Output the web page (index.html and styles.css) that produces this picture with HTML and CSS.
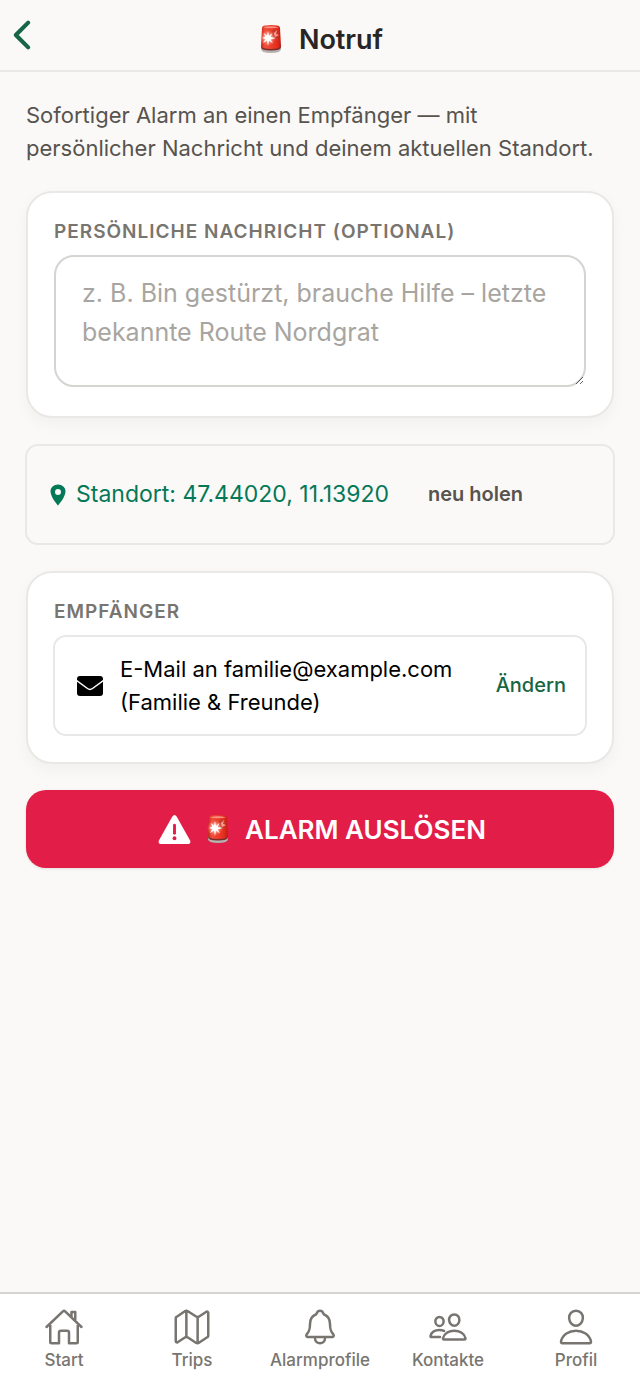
FILE: index.html
```
<!DOCTYPE html>
<html lang="de">
<head>
  <meta charset="UTF-8">
  <meta name="viewport" content="width=device-width, initial-scale=1">
  <title>Notruf</title>
  <link rel="stylesheet" href="styles.css">
</head>
<body>

  <!-- Siren, used in the title and on the alarm button -->
  <svg class="sprite" aria-hidden="true">
    <defs>
      <linearGradient id="glass" x1="0" x2="1" y1="0" y2="0">
        <stop offset="0" stop-color="#c9281c"/>
        <stop offset="0.2" stop-color="#f0513c"/>
        <stop offset="0.8" stop-color="#e52d1c"/>
        <stop offset="1" stop-color="#b81d14"/>
      </linearGradient>
      <radialGradient id="glow">
        <stop offset="0" stop-color="#fff"/>
        <stop offset="0.4" stop-color="#ffc4b8" stop-opacity="0.8"/>
        <stop offset="1" stop-color="#ff7a66" stop-opacity="0"/>
      </radialGradient>
    </defs>
    <symbol id="siren" viewBox="0 0 24 28">
      <path d="M2 21v3q0 4 10 4t10-4v-3z" fill="#b5b1b1"/>
      <path d="M2 20v2q0 3.500 10 3.500t10-3.500v-2z" fill="#7d2c26"/>
      <path d="M3 3q0-2 3-2.500 6-.8 12 0 3 .5 3 2.500l1 18q-1 3-10 3T2 21z" fill="url(#glass)"/>
      <path d="M4 2.500q8-2.500 16 0-8 1.500-16 0z" fill="#f79184"/>
      <path d="M13 6q5-3 6 2l-1 5-4 2z" fill="#c0392b"/>
      <path d="M14 5l1 3 3-3-1 4 3 1-4 2z" fill="#f9a294"/>
      <circle cx="9" cy="13" r="8" fill="url(#glow)"/>
      <path d="M9 6l1 5 3.500-3-2 4 5.500 1-5.500 1.500 2.500 4-4-3L9 21l-1-5.500-4 2.500 2.500-4-3.500-1 3.500-1.500-2-3.500 3.500 2.500z" fill="#fff"/>
    </symbol>
  </svg>

  <header class="header">
    <button class="back" type="button" aria-label="Zurück">
      <svg viewBox="0 0 512 512"><path d="M328 112L184 256l144 144"/></svg>
    </button>
    <h1><svg class="siren"><use href="#siren"/></svg>Notruf</h1>
  </header>

  <main class="content">
    <p class="intro">Sofortiger Alarm an einen Empfänger — mit persönlicher Nachricht und deinem aktuellen Standort.</p>

    <section class="card">
      <label class="label" for="message">Persönliche Nachricht (optional)</label>
      <textarea id="message" rows="2" placeholder="z. B. Bin gestürzt, brauche Hilfe – letzte bekannte Route Nordgrat"></textarea>
    </section>

    <section class="box location">
      <svg class="pin" viewBox="0 0 512 512"><path d="M256 32C167.670 32 96 96.510 96 176c0 128 160 304 160 304s160-176 160-304c0-79.490-71.670-144-160-144zm0 224a64 64 0 1 1 64-64 64 64 0 0 1-64 64z"/></svg>
      <span>Standort: 47.44020, 11.13920</span>
      <button class="refresh" type="button">neu holen</button>
    </section>

    <section class="card">
      <h2 class="label">Empfänger</h2>
      <div class="box recipient">
        <svg class="mail" viewBox="0 0 28 22">
          <rect x="1" y="1" width="26" height="20" rx="3"/>
          <path d="M0 5l11.500 8.500q2.500 1.800 5 0L28 5" fill="none" stroke="#fff" stroke-width="1.500"/>
        </svg>
        <span class="recipient-text">E-Mail an familie@example.com (Familie &amp; Freunde)</span>
        <button class="change" type="button">Ändern</button>
      </div>
    </section>

    <button class="alarm" type="button">
      <svg class="warning" viewBox="0 0 34 30">
        <path d="M14.500 2q2.500-4 5 0l13.500 24q1.500 4-2.500 4h-27q-4 0-2.500-4z" fill="#fff"/>
        <path d="M17 10.500v8.500" stroke="#e11d48" stroke-width="3" stroke-linecap="round"/>
        <circle cx="17" cy="24" r="2" fill="#e11d48"/>
      </svg>
      <svg class="siren"><use href="#siren"/></svg>
      <span>ALARM AUSLÖSEN</span>
    </button>
  </main>

  <nav class="tabs">
    <a href="#start">
      <svg viewBox="0 0 512 512"><path d="M80 212v236a16 16 0 0 0 16 16h96V328a24 24 0 0 1 24-24h80a24 24 0 0 1 24 24v136h96a16 16 0 0 0 16-16V212M480 256L266.890 52c-5-5.280-16.690-5.340-21.780 0L32 256M400 179V64h-48v69"/></svg>
      Start
    </a>
    <a href="#trips">
      <svg viewBox="0 0 512 512"><path d="M313.270 124.640L198.730 51.360a32 32 0 0 0-29.280.35L56.510 127.490A16 16 0 0 0 48 141.630v295.800a16 16 0 0 0 23.490 14.140l97.820-63.790a32 32 0 0 1 29.500-.24l111.860 73a32 32 0 0 0 29.270-.11l115.430-75.940a16 16 0 0 0 8.630-14.200V74.570a16 16 0 0 0-23.490-14.140l-98 63.860a32 32 0 0 1-29.240.35zM328 128v336M184 48v336"/></svg>
      Trips
    </a>
    <a href="#alarmprofile">
      <svg viewBox="0 0 512 512"><path d="M427.680 351.430C402 320 383.870 304 383.870 217.350 383.870 138 343.350 109.730 310 96c-4.430-1.820-8.600-6-9.950-10.550C294.200 65.540 277.800 48 256 48s-38.210 17.550-44 37.470c-1.350 4.600-5.520 8.710-9.950 10.530-33.390 13.750-73.870 41.920-73.870 121.350C128.130 304 110 320 84.320 351.430 73.680 364.450 83 384 101.610 384h308.880c18.510 0 27.770-19.610 17.190-32.570zM320 384v16a64 64 0 0 1-128 0v-16"/></svg>
      Alarmprofile
    </a>
    <a href="#kontakte">
      <svg viewBox="0 0 512 512"><path d="M402 168c-2.930 40.670-33.100 72-66 72s-63.120-31.320-66-72c-3-42.310 26.370-72 66-72s69 30.460 66 72zM336 304c-65.170 0-127.840 32.370-143.540 95.410-2.080 8.340 3.150 16.590 11.720 16.590h263.650c8.570 0 13.770-8.250 11.720-16.590C463.850 335.360 401.180 304 336 304zM200 185.940c-2.340 32.480-26.720 58.060-53 58.060s-50.700-25.570-53-58.060C91.610 152.150 115.340 128 147 128s55.390 24.770 53 57.940zM206 306c-18.050-8.270-37.930-11.450-59-11.450-52 0-102.100 25.850-114.650 76.200-1.650 6.660 2.530 13.250 9.370 13.250H154"/></svg>
      Kontakte
    </a>
    <a href="#profil">
      <svg viewBox="0 0 512 512"><path d="M344 144c-3.920 52.870-44 96-88 96s-84.150-43.120-88-96c-4-55 35-96 88-96s92 42 88 96zM256 304c-87 0-175.300 48-191.640 138.600C62.390 453.520 68.570 464 80 464h352c11.440 0 17.620-10.480 15.650-21.400C431.300 352 343 304 256 304z"/></svg>
      Profil
    </a>
  </nav>

</body>
</html>
```
FILE: styles.css
```
* { box-sizing: border-box; }
body {
  margin: 0;
  min-height: 100vh;
  display: flex;
  flex-direction: column;
  background: #faf9f7;
  font-family: Inter, sans-serif;
  font-size: 22px;
  line-height: 33px;
  color: #000;
}
button {
  margin: 0;
  padding: 0;
  border: none;
  background: none;
  font: inherit;
  cursor: pointer;
}
svg { flex-shrink: 0; display: block; }
.sprite { position: absolute; width: 0; height: 0; }

/* Header */
.header {
  display: grid;
  grid-template-columns: 44px 1fr 44px;
  align-items: center;
  height: 72px;
  border-bottom: 2px solid #e9e8e6;
}
.back svg {
  width: 44px;
  height: 48px;
  fill: none;
  stroke: #166544;
  stroke-width: 48;
  stroke-linecap: round;
  stroke-linejoin: round;
}
h1 {
  display: flex;
  justify-content: center;
  align-items: center;
  gap: 16px;
  margin: 8px 0 0 2px;
  font-size: 27px;
  font-weight: 600;
  color: #292524;
}
.siren { width: 24px; height: 28px; }

/* Content */
.content {
  flex: 1;
  display: flex;
  flex-direction: column;
  gap: 26px;
  padding: 27px 26px;
}
.intro { margin: 0; padding-right: 8px; color: #57534e; }
.card {
  padding: 26px;
  background: #fff;
  border: 2px solid #e9e8e6;
  border-radius: 26px;
  box-shadow: 0 6px 16px rgba(0, 0, 0, 0.04);
}
.label {
  display: block;
  margin: 0 0 10px;
  font-size: 19px;
  line-height: 26px;
  font-weight: 600;
  letter-spacing: 1px;
  text-transform: uppercase;
  color: #787570;
}
textarea {
  display: block;
  width: 100%;
  height: 132px;
  margin: 0 0 3px;
  padding: 17px 26px;
  border: 2px solid #d6d4d1;
  border-radius: 20px;
  background: #fff;
  font: inherit;
  font-size: 25px;
  line-height: 39px;
}
textarea::placeholder { color: #a8a5a0; }
.box {
  display: flex;
  align-items: center;
  min-height: 101px;
  margin: 0 -1px;
  padding: 0 19px;
  border: 2px solid #e9e8e6;
  border-radius: 13px;
}
.location { font-size: 23px; color: #047857; }
.pin { width: 24px; height: 24px; margin-right: 6px; fill: #047857; }
.refresh {
  margin-left: 39px;
  font-size: 20px;
  font-weight: 600;
  color: #57534e;
}
.mail { width: 28px; height: 22px; margin: 0 16px 0 2px; }
.recipient-text { flex: 1; }
.change {
  margin-left: 26px;
  font-size: 20px;
  font-weight: 500;
  color: #166544;
}
.alarm {
  display: flex;
  justify-content: center;
  align-items: center;
  gap: 15px;
  min-height: 78px;
  padding-left: 4px;
  border-radius: 20px;
  background: #e11d48;
  box-shadow: 0 1px 3px rgba(0, 0, 0, 0.1);
  color: #fff;
  font-size: 26px;
  font-weight: 600;
}
.warning { width: 33px; height: 29px; }

/* Tab bar */
.tabs {
  display: grid;
  grid-template-columns: repeat(5, 1fr);
  height: 94px;
  padding-top: 13px;
  background: #fff;
  border-top: 2px solid #d6d4d1;
}
.tabs a {
  display: flex;
  flex-direction: column;
  align-items: center;
  gap: 3px;
  font-size: 17px;
  line-height: 20px;
  font-weight: 500;
  color: #787570;
  text-decoration: none;
}
.tabs svg {
  width: 40px;
  height: 40px;
  fill: none;
  stroke: #787570;
  stroke-width: 32;
  stroke-linecap: round;
  stroke-linejoin: round;
}
```
